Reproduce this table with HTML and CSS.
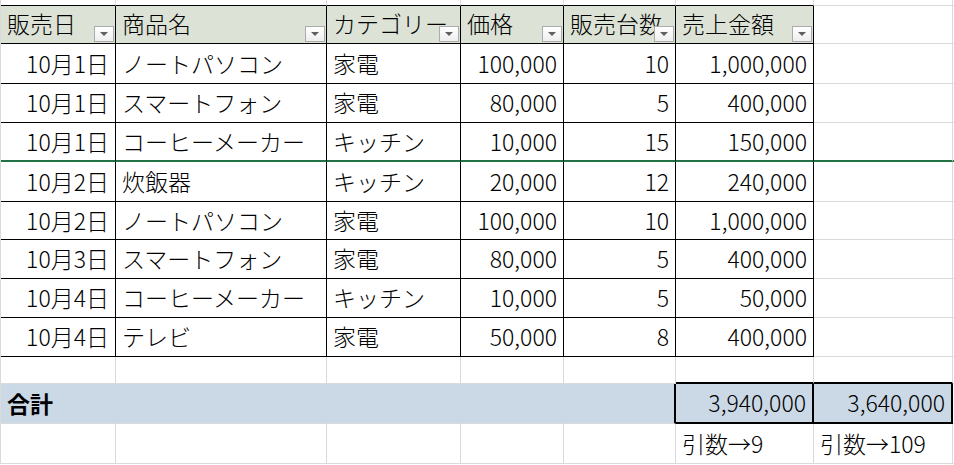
FILE: index.html
```html
<!DOCTYPE html>
<html lang="ja">
<head>
  <meta charset="UTF-8" />
  <title>売上表</title>
  <link rel="stylesheet" href="styles.css">
</head>
<body>

  <div class="sheet">

    <!-- 上の行（見切れ） -->
    <div class="row row-top">
      <div class="cell edge"></div>
      <div class="cell edge"></div>
      <div class="cell edge"></div>
      <div class="cell edge"></div>
      <div class="cell edge"></div>
      <div class="cell edge"></div>
      <div class="cell"></div>
      <div class="cell"></div>
    </div>

    <!-- 見出し -->
    <div class="row row-head">
      <div class="cell tb head">販売日<span class="filter"></span></div>
      <div class="cell tb head">商品名<span class="filter"></span></div>
      <div class="cell tb head">カテゴリー<span class="filter"></span></div>
      <div class="cell tb head">価格<span class="filter"></span></div>
      <div class="cell tb head">販売台数<span class="filter"></span></div>
      <div class="cell tb head">売上金額<span class="filter"></span></div>
      <div class="cell"></div>
      <div class="cell"></div>
    </div>

    <div class="row h40">
      <div class="cell tb num">10月1日</div>
      <div class="cell tb">ノートパソコン</div>
      <div class="cell tb">家電</div>
      <div class="cell tb num">100,000</div>
      <div class="cell tb num">10</div>
      <div class="cell tb num">1,000,000</div>
      <div class="cell"></div>
      <div class="cell"></div>
    </div>

    <div class="row h39">
      <div class="cell tb num">10月1日</div>
      <div class="cell tb">スマートフォン</div>
      <div class="cell tb">家電</div>
      <div class="cell tb num">80,000</div>
      <div class="cell tb num">5</div>
      <div class="cell tb num">400,000</div>
      <div class="cell"></div>
      <div class="cell"></div>
    </div>

    <!-- 緑の線はこの行の下 -->
    <div class="row h39 split">
      <div class="cell tb num">10月1日</div>
      <div class="cell tb">コーヒーメーカー</div>
      <div class="cell tb">キッチン</div>
      <div class="cell tb num">10,000</div>
      <div class="cell tb num">15</div>
      <div class="cell tb num">150,000</div>
      <div class="cell"></div>
      <div class="cell"></div>
    </div>

    <div class="row h40">
      <div class="cell tb num">10月2日</div>
      <div class="cell tb">炊飯器</div>
      <div class="cell tb">キッチン</div>
      <div class="cell tb num">20,000</div>
      <div class="cell tb num">12</div>
      <div class="cell tb num">240,000</div>
      <div class="cell"></div>
      <div class="cell"></div>
    </div>

    <div class="row h38">
      <div class="cell tb num">10月2日</div>
      <div class="cell tb">ノートパソコン</div>
      <div class="cell tb">家電</div>
      <div class="cell tb num">100,000</div>
      <div class="cell tb num">10</div>
      <div class="cell tb num">1,000,000</div>
      <div class="cell"></div>
      <div class="cell"></div>
    </div>

    <div class="row h39">
      <div class="cell tb num">10月3日</div>
      <div class="cell tb">スマートフォン</div>
      <div class="cell tb">家電</div>
      <div class="cell tb num">80,000</div>
      <div class="cell tb num">5</div>
      <div class="cell tb num">400,000</div>
      <div class="cell"></div>
      <div class="cell"></div>
    </div>

    <div class="row h39">
      <div class="cell tb num">10月4日</div>
      <div class="cell tb">コーヒーメーカー</div>
      <div class="cell tb">キッチン</div>
      <div class="cell tb num">10,000</div>
      <div class="cell tb num">5</div>
      <div class="cell tb num">50,000</div>
      <div class="cell"></div>
      <div class="cell"></div>
    </div>

    <div class="row h39">
      <div class="cell tb num">10月4日</div>
      <div class="cell tb">テレビ</div>
      <div class="cell tb">家電</div>
      <div class="cell tb num">50,000</div>
      <div class="cell tb num">8</div>
      <div class="cell tb num">400,000</div>
      <div class="cell"></div>
      <div class="cell"></div>
    </div>

    <!-- 空行 -->
    <div class="row row-blank">
      <div class="cell"></div>
      <div class="cell"></div>
      <div class="cell"></div>
      <div class="cell"></div>
      <div class="cell"></div>
      <div class="cell box-top"></div>
      <div class="cell box-top"></div>
      <div class="cell"></div>
    </div>

    <!-- 合計 -->
    <div class="row row-total">
      <div class="cell fill total-label">合計</div>
      <div class="cell fill"></div>
      <div class="cell fill"></div>
      <div class="cell fill"></div>
      <div class="cell fill box-left"></div>
      <div class="cell fill num box">3,940,000</div>
      <div class="cell fill num box">3,640,000</div>
      <div class="cell"></div>
    </div>

    <div class="row h40">
      <div class="cell"></div>
      <div class="cell"></div>
      <div class="cell"></div>
      <div class="cell"></div>
      <div class="cell"></div>
      <div class="cell">引数→9</div>
      <div class="cell">引数→109</div>
      <div class="cell"></div>
    </div>

  </div>

</body>
</html>
```

FILE: styles.css
```css
* {
  box-sizing: border-box;
}

body {
  margin: 0;
  padding: 0;
  background-color: #ffffff;
  color: #000000;
  font-family: "Noto Sans CJK JP", "Noto Sans", sans-serif;
  font-size: 23px;
  font-weight: 300;
  overflow: hidden;
}

.sheet {
  width: 954px;
  border-left: 1px solid #dadada;
}

.row {
  display: grid;
  grid-template-columns: 115px 211px 134px 103px 112px 138px 139px 1fr;
}

.row-top { height: 6px; }
.row-head { height: 38px; }
.row-blank { height: 27px; }
.row-total { height: 40px; }
.h38 { height: 38px; }
.h39 { height: 39px; }
.h40 { height: 40px; }

.cell {
  position: relative;
  display: flex;
  align-items: center;
  padding: 0 6px 1px;
  border-right: 1px solid #dadada;
  border-bottom: 1px solid #dadada;
  white-space: nowrap;
  overflow: hidden;
  line-height: 1;
}

.cell.edge {
  border-bottom-color: #000000;
}

.cell.tb {
  border-right-color: #000000;
  border-bottom-color: #000000;
}

.num {
  justify-content: flex-end;
}

.head {
  background-color: #dce2d5;
  padding-bottom: 3px;
}

/* フィルターボタン */
.filter {
  position: absolute;
  right: 1px;
  bottom: 1px;
  width: 20px;
  height: 16px;
  border: 1px solid #ababab;
  background: linear-gradient(#ffffff, #eeeeee);
  display: flex;
  align-items: center;
  justify-content: center;
}

.filter::after {
  content: "";
  border-left: 4px solid transparent;
  border-right: 4px solid transparent;
  border-top: 4px solid #5f5f5f;
}

.split .cell {
  border-bottom: 2px solid #217346;
}

.fill {
  background-color: #cbd8e6;
  border-right-color: #cbd8e6;
}

.total-label {
  font-weight: bold;
}

.box-top {
  border-bottom: 2px solid #000000;
}

.box-left {
  border-right: 2px solid #000000;
}

.cell.box {
  border-right: 2px solid #000000;
  border-bottom: 2px solid #000000;
}
```
